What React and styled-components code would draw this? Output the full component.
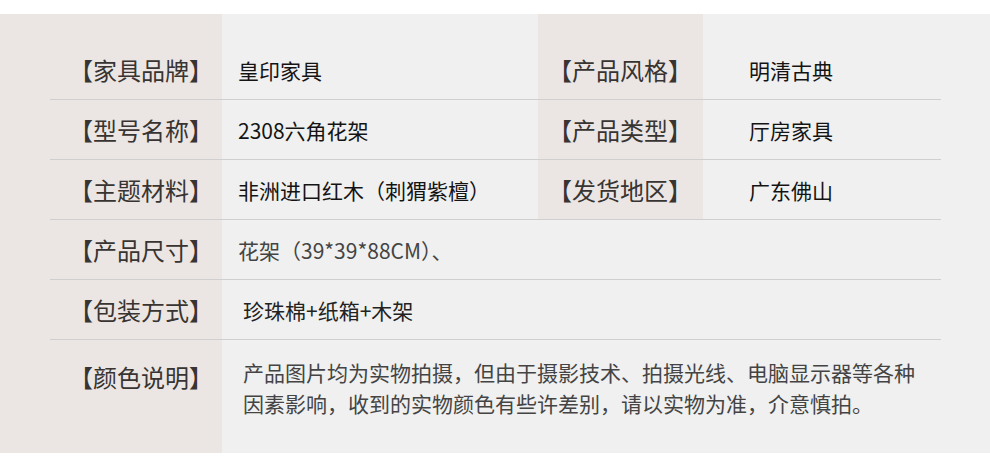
import styled, { createGlobalStyle } from "styled-components"

const Global = createGlobalStyle`
    body {
        margin: 0;
        background: #ffffff;
        font-family: "Noto Sans CJK SC", "Noto Sans", sans-serif;
    }
`

const pairs = [
    { label: "【家具品牌】", value: "皇印家具", label2: "【产品风格】", value2: "明清古典" },
    { label: "【型号名称】", value: "2308六角花架", label2: "【产品类型】", value2: "厅房家具" },
    { label: "【主题材料】", value: "非洲进口红木（刺猬紫檀）", label2: "【发货地区】", value2: "广东佛山" },
]

export default function App() {
    return (
        <Page>
            <Global />
            <Panel>
                {pairs.map((p, i) => (
                    <Row key={p.label} $first={i === 0}>
                        <Label $first={i === 0}>{p.label}</Label>
                        <Value $first={i === 0}>{p.value}</Value>
                        <Label2 $first={i === 0}>{p.label2}</Label2>
                        <Value2 $first={i === 0}>{p.value2}</Value2>
                    </Row>
                ))}
                <Row>
                    <Label>【产品尺寸】</Label>
                    <WideValue $indent={16} $tone="#444">花架（39*39*88CM）、</WideValue>
                </Row>
                <Row>
                    <Label>【包装方式】</Label>
                    <WideValue $indent={21} $tone="#222">珍珠棉+纸箱+木架</WideValue>
                </Row>
                <LastRow>
                    <NoteLabel>【颜色说明】</NoteLabel>
                    <Note>
                        产品图片均为实物拍摄，但由于摄影技术、拍摄光线、电脑显示器等各种
                        <br />
                        因素影响，收到的实物颜色有些许差别，请以实物为准，介意慎拍。
                    </Note>
                </LastRow>
            </Panel>
        </Page>
    )
}

const Page = styled.div`
    width: 990px;
    height: 467px;
    padding: 14px 0;
    box-sizing: border-box;
`
const Panel = styled.div`
    height: 439px;
    background: linear-gradient(to right, #ebe6e3 0 222px, #f0f0f0 222px);
    padding-left: 50px;
    display: flex;
    flex-direction: column;
`
const Row = styled.div`
    width: 891px;
    display: grid;
    grid-template-columns: 172px 316px 165px 1fr;
    border-bottom: 1px solid #d0cfcf;
`
const Cell = styled.div`
    height: 59px;
    box-sizing: content-box;
    padding-top: ${(p) => (p.$first ? "26px" : "0")};
    display: flex;
    align-items: center;
    white-space: nowrap;
`
const Label = styled(Cell)`
    padding-left: 19px;
    font-size: 24px;
    color: #383432;
`
const Value = styled(Cell)`
    padding-left: 16px;
    font-size: 21px;
    color: #141414;
`
const Label2 = styled(Label)`
    padding-left: 10px;
    background: #ebe6e3;
`
const Value2 = styled(Value)`
    padding-left: 46px;
`
const WideValue = styled(Cell)`
    grid-column: 2 / 5;
    padding-left: ${(p) => p.$indent}px;
    font-size: 21px;
    color: ${(p) => p.$tone};
`
const LastRow = styled.div`
    flex: 1;
    display: grid;
    grid-template-columns: 172px 1fr;
    width: 891px;
`
const NoteLabel = styled.div`
    padding: 21px 0 0 19px;
    font-size: 24px;
    line-height: 31px;
    color: #383432;
    white-space: nowrap;
`
const Note = styled.p`
    margin: 0;
    padding: 17px 0 0 21px;
    font-size: 21px;
    line-height: 31px;
    color: #444;
    white-space: nowrap;
`
